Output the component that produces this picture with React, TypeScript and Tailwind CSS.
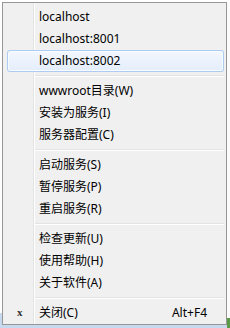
import React from "react";

type Item = { label: string; shortcut?: string; icon?: boolean; active?: boolean } | "sep";

const items: Item[] = [
  { label: "localhost" },
  { label: "localhost:8001" },
  { label: "localhost:8002", active: true },
  "sep",
  { label: "wwwroot目录(W)" },
  { label: "安装为服务(I)" },
  { label: "服务器配置(C)" },
  "sep",
  { label: "启动服务(S)" },
  { label: "暂停服务(P)" },
  { label: "重启服务(R)" },
  "sep",
  { label: "检查更新(U)" },
  { label: "使用帮助(H)" },
  { label: "关于软件(A)" },
  "sep",
  { label: "关闭(C)", shortcut: "Alt+F4", icon: true },
];

export default function App() {
  return (
    <div
      className="flex w-[230px] h-[328px] pt-[2px] pl-[2px] bg-[linear-gradient(to_bottom,#ffffff_313px,#c6d9ef_313px)] overflow-hidden"
      style={{ fontFamily: '"Noto Sans", "Noto Sans CJK SC", sans-serif' }}
    >
      <div className="w-[225px] h-[323px] border border-[#979797] pt-[3px] pl-[4px] pr-[2px] bg-[linear-gradient(to_right,#f0f0f0_30px,#e2e3e3_30px,#e2e3e3_31px,#ffffff_31px,#ffffff_32px,#f0f0f0_32px)]">
        {items.map((it, i) =>
          it === "sep" ? (
            <div key={i} className="h-[8px] pt-[3px] pl-[28px]">
              <div className="h-px bg-[#e2e3e3]" />
              <div className="h-px bg-white" />
            </div>
          ) : (
            <div
              key={i}
              className={
                "flex items-center h-[22px] text-[12px] leading-none text-[#000] " +
                (it.active
                  ? "rounded-[3px] bg-[linear-gradient(to_bottom,#f4f8fe,#e3edfb)] shadow-[inset_0_0_0_1px_#aecbf2,inset_0_0_0_2px_#f8fbff]"
                  : "")
              }
            >
              <div className="w-[32px] flex items-center pl-[10px]">
                {it.icon && (
                  <span className="font-['Liberation_Serif'] font-bold text-[11px] text-[#333] leading-none -mt-[2px]">
                    x
                  </span>
                )}
              </div>
              <span className="flex-1 whitespace-nowrap">{it.label}</span>
              {it.shortcut && <span className="pr-[17px] whitespace-nowrap">{it.shortcut}</span>}
            </div>
          )
        )}
      </div>
      <div className="w-[3px] self-stretch bg-[linear-gradient(to_bottom,#fbfbfb_316px,#5b9a48_316px)]" />
    </div>
  );
}
